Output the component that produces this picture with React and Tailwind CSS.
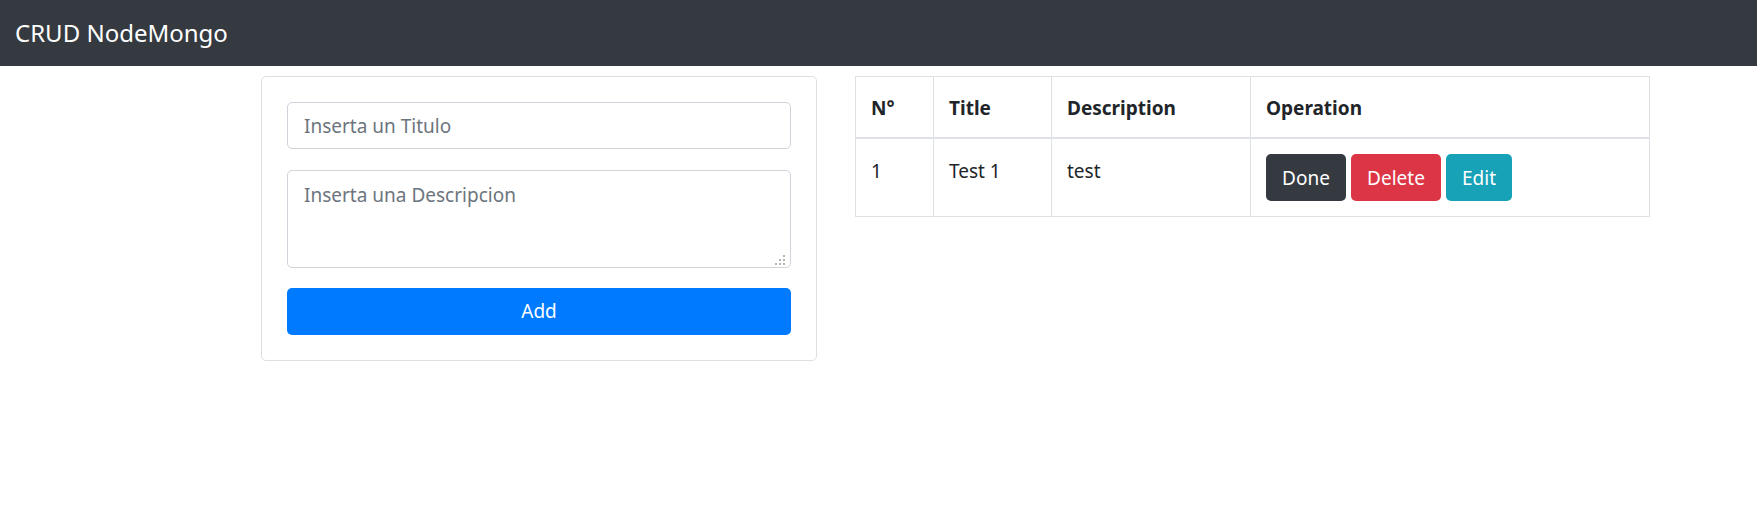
import React from "react";

const fontStack = '"Noto Sans", "Liberation Sans", sans-serif';

function Grip() {
  const dots = [
    [8, 0],
    [4, 4],
    [8, 4],
    [0, 8],
    [4, 8],
    [8, 8],
  ];
  return (
    <svg
      className="absolute right-[6px] bottom-[3px] pointer-events-none"
      width="10"
      height="10"
      viewBox="0 0 10 10"
    >
      {dots.map(([x, y], i) => (
        <rect key={i} x={x} y={y} width="2" height="2" fill="#b4b4b4" />
      ))}
    </svg>
  );
}

export default function App() {
  return (
    <div className="min-h-[508px] bg-white text-[#212529]" style={{ fontFamily: fontStack }}>
      <nav className="h-[66px] bg-[#343a40] flex items-center px-[15px]">
        <span className="text-white text-[24px] leading-none">CRUD NodeMongo</span>
      </nav>
      <div className="flex items-start pt-[10px] pl-[261px] gap-[38px]">
        <div className="w-[556px] border border-[#dfdfdf] rounded-[5px] p-[25px] flex flex-col">
          <input
            className="h-[47px] w-full border border-[#ced4da] rounded-[5px] px-[16px] pt-[1px] text-[19px] text-[#495057] placeholder:text-[#6c757d] outline-none"
            placeholder="Inserta un Titulo"
          />
          <div className="relative mt-[21px] h-[98px]">
            <textarea
              className="block h-[98px] w-full resize-none border border-[#ced4da] rounded-[5px] px-[16px] pt-[9px] pb-[5px] text-[19px] leading-[30px] text-[#495057] placeholder:text-[#6c757d] outline-none"
              placeholder="Inserta una Descripcion"
            />
            <Grip />
          </div>
          <button className="mt-[20px] h-[47px] w-full bg-[#007bff] text-white text-[19px] rounded-[5px]">
            Add
          </button>
        </div>
        <table className="w-[794px] border-collapse table-fixed text-[19px]">
          <colgroup>
            <col className="w-[78px]" />
            <col className="w-[118px]" />
            <col className="w-[199px]" />
            <col className="w-[399px]" />
          </colgroup>
          <thead>
            <tr>
              {["N°", "Title", "Description", "Operation"].map((h) => (
                <th
                  key={h}
                  className="border border-[#dee2e6] border-b-2 px-[15px] pt-[16px] pb-[14px] leading-[30px] text-left font-bold"
                >
                  {h}
                </th>
              ))}
            </tr>
          </thead>
          <tbody>
            <tr>
              <td className="border border-[#dee2e6] px-[15px] pt-[17px] pb-[13px] leading-[30px] align-top">1</td>
              <td className="border border-[#dee2e6] px-[15px] pt-[17px] pb-[13px] leading-[30px] align-top">Test 1</td>
              <td className="border border-[#dee2e6] px-[15px] pt-[17px] pb-[13px] leading-[30px] align-top">test</td>
              <td className="border border-[#dee2e6] p-[15px] leading-[30px] align-top">
                <div className="flex gap-[5px]">
                  <button className="h-[47px] w-[80px] bg-[#343a40] text-white rounded-[5px]">Done</button>
                  <button className="h-[47px] w-[90px] bg-[#dc3545] text-white rounded-[5px]">Delete</button>
                  <button className="h-[47px] w-[66px] bg-[#17a2b8] text-white rounded-[5px]">Edit</button>
                </div>
              </td>
            </tr>
          </tbody>
        </table>
      </div>
    </div>
  );
}
